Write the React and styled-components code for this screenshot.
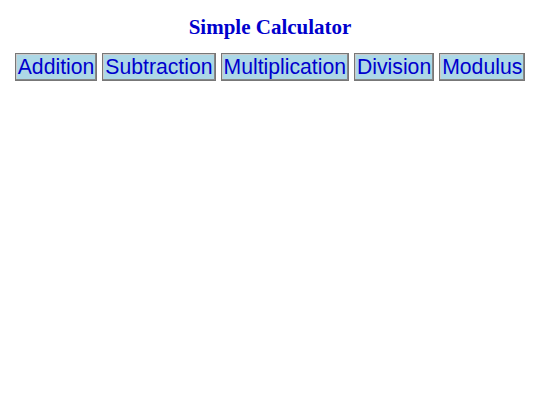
import React from "react";
import styled, { createGlobalStyle } from "styled-components";

const GlobalStyle = createGlobalStyle`
  body {
    margin: 8px;
    background: #fff;
    font-family: "Liberation Serif", "Times New Roman", serif;
  }
`;

const Container = styled.div`
  text-align: center;
`;

const Title = styled.h2`
  color: #0000cd;
  font-size: 21px;
  font-weight: bold;
  line-height: 24px;
  margin: 7px 0 14px;
`;

const Row = styled.div`
  display: flex;
  justify-content: center;
  gap: 5px;
`;

const OpButton = styled.button`
  background: #add8e6;
  color: #0000cd;
  font-family: "Liberation Sans", Arial, sans-serif;
  font-size: 21.2px;
  line-height: 24px;
  padding: 1px 2px;
  border: 1px solid #777;
  box-shadow: inset -1px -1px 0 #888, inset 1px 1px 0 #ccc;
  cursor: pointer;
`;

const operations = ["Addition", "Subtraction", "Multiplication", "Division", "Modulus"];

const App = () => {
  return (
    <>
      <GlobalStyle />
      <Container>
        <Title>Simple Calculator</Title>
        <Row>
          {operations.map((op) => (
            <OpButton key={op}>{op}</OpButton>
          ))}
        </Row>
      </Container>
    </>
  );
};

export default App;
